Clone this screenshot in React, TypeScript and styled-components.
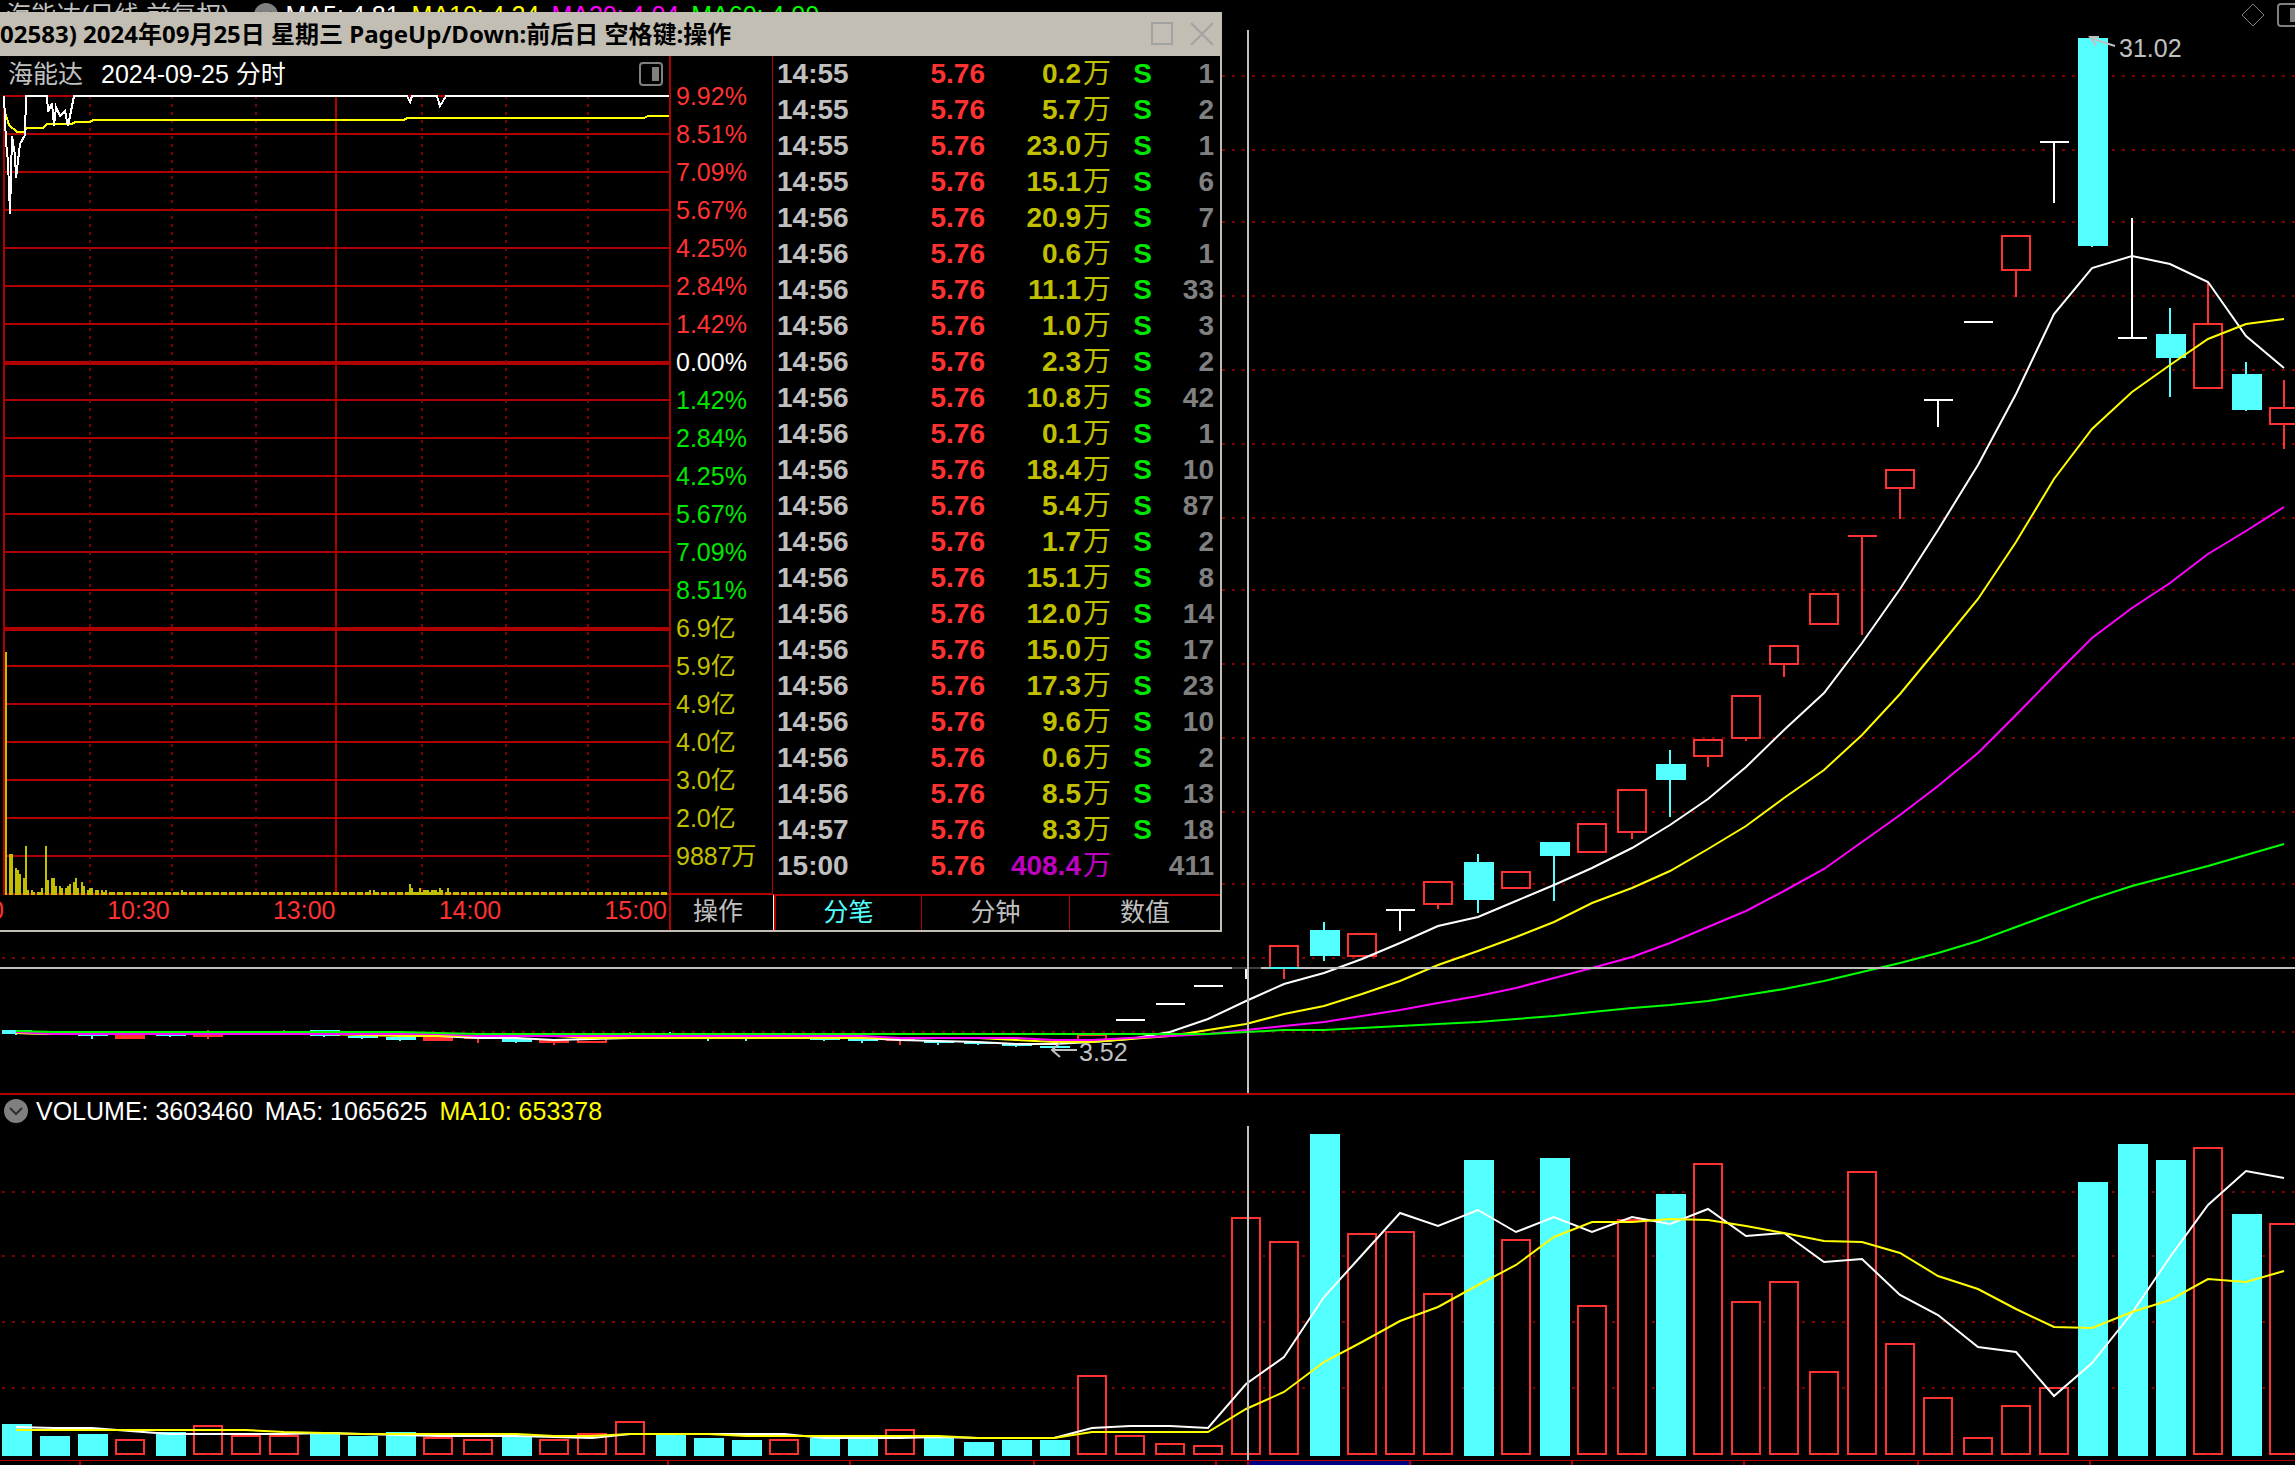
import React from 'react';
import styled, { createGlobalStyle } from 'styled-components';

const GlobalStyle = createGlobalStyle`
  * { box-sizing: border-box; }
  body {
    margin: 0;
    background: #000;
    color: #fff;
    font-family: "Liberation Sans", "Noto Sans CJK SC", sans-serif;
    font-size: 25px;
    line-height: 28px;
    overflow: hidden;
  }
  button {
    margin: 0;
    padding: 0;
    border: 0;
    background: none;
    color: inherit;
    font: inherit;
    cursor: pointer;
  }
`;

const color = {
  grid: '#b00000',
  dots: '#800000',
  up: '#ff3232',
  down: '#54ffff',
  white: '#ffffff',
  yellow: '#ffff00',
  magenta: '#ff00ff',
  green: '#00ff00',
  silver: '#c0c0c0',
  gray: '#808080',
  olive: '#c0c000',
  frame: '#c2beb3',
};

const Page = styled.main`
  position: relative;
  display: flex;
  flex-direction: column;
  min-height: 100vh;
  overflow: hidden;
`;

const Pane = styled.section<{ $ruled?: boolean }>`
  display: flex;
  flex-direction: column;
  border-top: ${(p) => (p.$ruled ? `2px solid ${color.grid}` : '0')};
`;

const PaneHeader = styled.header<{ $height: number }>`
  display: flex;
  align-items: center;
  gap: 8px;
  height: ${(p) => p.$height}px;
  padding-left: 4px;
  white-space: nowrap;
`;

const LegendGroup = styled.div`
  display: flex;
  gap: 12px;
`;

const Legend = styled.span<{ $color: string }>`
  color: ${(p) => p.$color};
`;

const StockName = styled.span`
  padding: 0 16px 0 2px;
  color: ${color.silver};
`;

const Spacer = styled.span`
  flex: 1;
`;

const IconButton = styled.button`
  display: flex;
  flex: none;
  color: ${color.gray};
`;

const ClippedTools = styled.div`
  display: flex;
  align-items: center;
  gap: 12px;
  width: 54px;
  overflow: hidden;
`;

const ChartSvg = styled.svg`
  display: block;
  width: 100%;
  height: auto;
  font-size: 25px;
`;

/* ---------- floating intraday window ---------- */

const FloatingWindow = styled.section`
  position: absolute;
  top: 12px;
  left: 0;
  width: 1222px;
  background: #000;
  border: solid ${color.frame};
  border-width: 0 2px 2px 0;
`;

const TitleBar = styled.header`
  display: flex;
  align-items: center;
  justify-content: space-between;
  height: 44px;
  padding-right: 8px;
  margin-right: -2px;
  background: ${color.frame};
`;

const Title = styled.h1`
  margin: 0;
  color: #000;
  font: bold 24px/44px "Noto Sans", "Noto Sans CJK SC", sans-serif;
  white-space: nowrap;
`;

const WindowButtons = styled.div`
  display: flex;
  gap: 16px;
  button { color: #a2a2a2; }
`;

const WindowBody = styled.div`
  display: grid;
  grid-template-columns: 671px 102px 1fr;
  height: 874px;
`;

const IntradayColumn = styled.div`
  display: flex;
  flex-direction: column;
  border-right: 2px solid ${color.grid};
`;

const IntradayHeader = styled.header`
  display: flex;
  align-items: center;
  gap: 18px;
  height: 36px;
  padding: 0 6px 0 8px;
`;

const TimeAxis = styled.div`
  display: grid;
  grid-template-columns: 4px repeat(4, 1fr);
  flex: 1;
  align-items: start;
  padding-right: 2px;
  color: ${color.up};
  overflow: hidden;
  span {
    display: flex;
    justify-content: flex-end;
  }
`;

const ScaleColumn = styled.div`
  display: flex;
  flex-direction: column;
`;

const ScaleList = styled.ul`
  flex: 1;
  margin: 0;
  padding: 21px 0 0 5px;
  list-style: none;
  border-right: 1px solid ${color.grid};
`;

const ScaleItem = styled.li<{ $color: string }>`
  height: 38px;
  line-height: 38px;
  color: ${(p) => p.$color};
  white-space: nowrap;
`;

const ActionButton = styled.button`
  height: 37px;
  padding: 0 8px 4px 0;
  border-top: 2px solid ${color.grid};
  color: ${color.silver};
`;

const TickColumn = styled.div`
  display: flex;
  flex-direction: column;
  justify-content: space-between;
`;

const TickTable = styled.table`
  width: 100%;
  border-collapse: collapse;
  table-layout: fixed;
  font-size: 28px;
  font-weight: bold;
  td {
    height: 36px;
    padding: 0;
    line-height: 36px;
    white-space: nowrap;
  }
`;

const Cell = styled.td<{ $color: string; $align?: string }>`
  color: ${(p) => p.$color};
  text-align: ${(p) => p.$align ?? 'right'};
`;

const TimeCell = styled(Cell)`
  && { padding-left: 4px; }
`;

const CountCell = styled(Cell)`
  && { padding-right: 6px; }
`;

const Unit = styled.span`
  padding-left: 2px;
  font-weight: normal;
`;

const Tabs = styled.nav`
  display: grid;
  grid-template-columns: 147px 148px 1fr;
  height: 36px;
  border-top: 2px solid ${color.grid};
  border-left: 1px solid ${color.white};
`;

const Tab = styled.button<{ $active?: boolean }>`
  padding-bottom: 2px;
  color: ${(p) => (p.$active ? color.down : color.silver)};
  border-left: ${(p) => (p.$active ? 2 : 1)}px solid ${color.grid};
`;

/* ---------- data ---------- */

const lefts = [
  2, 40, 78, 116, 156, 194, 232, 270, 310, 348, 386, 424, 464, 502, 540, 578, 616, 656, 694, 732,
  770, 810, 848, 886, 924, 964, 1002, 1040, 1078, 1116, 1156, 1194, 1232, 1270, 1310, 1348, 1386,
  1424, 1464, 1502, 1540, 1578, 1618, 1656, 1694, 1732, 1770, 1810, 1848, 1886, 1924, 1964, 2002,
  2040, 2078, 2118, 2156, 2194, 2232, 2270,
];

type Kind = 'S' | 'H' | 'W' | 'R';
// [slot, kind, body top, body bottom, wick top, wick bottom]
const candles: [number, Kind, number, number, number, number][] = [
  [0, 'S', 1030, 1034, 1030, 1035], [2, 'S', 1034, 1036, 1034, 1039], [3, 'H', 1036, 1038, 1036, 1038],
  [4, 'S', 1034, 1036, 1034, 1037], [5, 'H', 1034, 1036, 1030, 1039], [7, 'H', 1033, 1034, 1030, 1034],
  [8, 'S', 1030, 1036, 1030, 1037], [9, 'S', 1036, 1038, 1036, 1039], [10, 'S', 1037, 1040, 1037, 1041],
  [11, 'H', 1038, 1040, 1038, 1040], [12, 'R', 1038, 1038, 1038, 1043], [13, 'S', 1038, 1042, 1038, 1043],
  [14, 'H', 1040, 1042, 1040, 1045], [15, 'H', 1038, 1042, 1038, 1042], [16, 'R', 1036, 1036, 1032, 1036],
  [17, 'S', 1034, 1036, 1032, 1036], [18, 'S', 1036, 1038, 1036, 1041], [19, 'S', 1036, 1038, 1036, 1041],
  [21, 'S', 1038, 1040, 1038, 1041], [22, 'S', 1038, 1041, 1038, 1043], [23, 'R', 1040, 1040, 1040, 1045],
  [24, 'S', 1041, 1043, 1041, 1045], [25, 'S', 1042, 1044, 1042, 1045], [26, 'S', 1044, 1046, 1044, 1047],
  [27, 'S', 1046, 1048, 1046, 1048], [28, 'H', 1035, 1040, 1035, 1040],
  [29, 'W', 1020, 1020, 1020, 1020], [30, 'W', 1004, 1004, 1004, 1004], [31, 'W', 986, 986, 986, 986],
  [32, 'W', 968, 968, 968, 979], [33, 'H', 946, 968, 946, 979], [34, 'S', 930, 956, 922, 961],
  [35, 'H', 934, 956, 934, 956], [36, 'W', 910, 910, 910, 931], [37, 'H', 882, 904, 882, 909],
  [38, 'S', 862, 900, 854, 913], [39, 'H', 872, 888, 872, 888], [40, 'S', 842, 856, 842, 901],
  [41, 'H', 824, 852, 824, 852], [42, 'H', 790, 832, 790, 839], [43, 'S', 764, 780, 750, 817],
  [44, 'H', 740, 756, 740, 767], [45, 'H', 696, 738, 696, 741], [46, 'H', 646, 664, 646, 677],
  [47, 'H', 594, 624, 594, 624], [48, 'R', 536, 536, 536, 635], [49, 'H', 470, 488, 470, 519],
  [50, 'W', 400, 400, 400, 427], [51, 'W', 322, 322, 322, 322], [52, 'H', 236, 270, 236, 297],
  [53, 'W', 142, 142, 142, 203], [54, 'S', 38, 246, 38, 247], [55, 'W', 338, 338, 218, 338],
  [56, 'S', 334, 358, 308, 397], [57, 'H', 324, 388, 283, 388], [58, 'S', 374, 410, 362, 411],
  [59, 'H', 408, 424, 380, 449],
];

const priceMa = {
  white: [
    1033, 1034, 1034, 1034, 1034, 1034, 1034, 1034, 1034, 1034, 1034, 1036, 1038, 1038, 1040, 1039,
    1038, 1038, 1038, 1038, 1038, 1038, 1038, 1040, 1041, 1042, 1044, 1044, 1042, 1039, 1032, 1019,
    1001, 984, 973, 959, 943, 926, 917, 901, 885, 868, 848, 825, 799, 767, 730, 693, 643, 589, 530,
    465, 394, 314, 268, 256, 264, 282, 336, 368,
  ],
  yellow: [
    1033, 1034, 1034, 1034, 1034, 1034, 1034, 1034, 1034, 1035, 1036, 1036, 1036, 1036, 1036, 1038,
    1038, 1038, 1038, 1038, 1038, 1038, 1038, 1038, 1038, 1038, 1040, 1042, 1042, 1039, 1036, 1030,
    1024, 1014, 1006, 994, 981, 965, 951, 937, 922, 903, 888, 871, 849, 826, 798, 770, 735, 694, 648,
    599, 542, 479, 429, 392, 365, 339, 324, 319,
  ],
  magenta: [
    1032, 1034, 1034, 1034, 1034, 1034, 1034, 1034, 1034, 1034, 1034, 1034, 1036, 1036, 1036, 1036,
    1036, 1036, 1036, 1036, 1036, 1036, 1036, 1038, 1038, 1038, 1038, 1040, 1040, 1038, 1036, 1034,
    1030, 1026, 1022, 1016, 1010, 1003, 996, 988, 978, 968, 957, 943, 927, 911, 891, 869, 842, 815,
    786, 753, 715, 676, 638, 608, 583, 554, 531, 507,
  ],
  green: [
    1031, 1032, 1032, 1032, 1032, 1032, 1032, 1032, 1032, 1032, 1032, 1033, 1034, 1034, 1034, 1034,
    1034, 1034, 1034, 1034, 1034, 1034, 1034, 1034, 1034, 1034, 1034, 1034, 1034, 1034, 1034, 1034,
    1032, 1030, 1030, 1028, 1026, 1024, 1022, 1019, 1016, 1012, 1008, 1005, 1001, 995, 989, 981, 972,
    963, 953, 941, 927, 913, 899, 886, 876, 866, 855, 844,
  ],
};

const volumes: [Kind, number][] = [
  ['S', 1424], ['S', 1436], ['S', 1434], ['H', 1440], ['S', 1432], ['H', 1426], ['H', 1436],
  ['H', 1436], ['S', 1432], ['S', 1436], ['S', 1432], ['H', 1438], ['H', 1440], ['S', 1436],
  ['H', 1440], ['H', 1434], ['H', 1422], ['S', 1434], ['S', 1438], ['S', 1440], ['H', 1440],
  ['S', 1438], ['S', 1438], ['H', 1430], ['S', 1438], ['S', 1442], ['S', 1440], ['S', 1440],
  ['H', 1376], ['H', 1436], ['H', 1444], ['H', 1446], ['H', 1218], ['H', 1242], ['S', 1134],
  ['H', 1234], ['H', 1232], ['H', 1294], ['S', 1160], ['H', 1240], ['S', 1158], ['H', 1306],
  ['H', 1220], ['S', 1194], ['H', 1164], ['H', 1302], ['H', 1282], ['H', 1372], ['H', 1172],
  ['H', 1344], ['H', 1398], ['H', 1438], ['H', 1406], ['H', 1388], ['S', 1182], ['S', 1144],
  ['S', 1160], ['H', 1148], ['S', 1214], ['H', 1224],
];

const volumeMa = {
  white: [
    1427, 1428, 1428, 1431, 1434, 1434, 1434, 1434, 1433, 1434, 1435, 1436, 1436, 1436, 1437, 1438,
    1434, 1434, 1434, 1434, 1434, 1438, 1438, 1438, 1437, 1438, 1438, 1438, 1428, 1426, 1426, 1428,
    1384, 1357, 1297, 1255, 1213, 1226, 1210, 1232, 1217, 1232, 1217, 1224, 1209, 1236, 1233, 1262,
    1259, 1295, 1315, 1347, 1352, 1396, 1363, 1313, 1257, 1205, 1171, 1178,
  ],
  yellow: [
    1430, 1430, 1430, 1430, 1430, 1430, 1430, 1432, 1433, 1434, 1434, 1434, 1434, 1434, 1436, 1436,
    1434, 1434, 1434, 1436, 1436, 1436, 1436, 1436, 1436, 1438, 1438, 1438, 1432, 1432, 1432, 1432,
    1409, 1392, 1362, 1342, 1321, 1307, 1285, 1265, 1237, 1222, 1222, 1219, 1220, 1226, 1233, 1241,
    1242, 1253, 1276, 1289, 1309, 1327, 1328, 1312, 1300, 1279, 1282, 1271,
  ],
};

const priceGrid = [76, 150, 222, 296, 370, 444, 518, 590, 664, 738, 812, 884, 958, 1032];
const volumeGrid = [1192, 1256, 1322, 1388];
const axisTicks = [80, 668, 850, 1034, 1216, 1248, 1410, 1572, 1744, 1918, 2090];

const scale: [string, string][] = [
  ...['9.92%', '8.51%', '7.09%', '5.67%', '4.25%', '2.84%', '1.42%'].map((t): [string, string] => [t, color.up]),
  ['0.00%', color.white],
  ...['1.42%', '2.84%', '4.25%', '5.67%', '7.09%', '8.51%'].map((t): [string, string] => [t, '#00e600']),
  ...['6.9亿', '5.9亿', '4.9亿', '4.0亿', '3.0亿', '2.0亿', '9887万'].map((t): [string, string] => [t, color.olive]),
];

const trades: [string, string, number][] = [
  ['14:55', '0.2', 1], ['14:55', '5.7', 2], ['14:55', '23.0', 1], ['14:55', '15.1', 6],
  ['14:56', '20.9', 7], ['14:56', '0.6', 1], ['14:56', '11.1', 33], ['14:56', '1.0', 3],
  ['14:56', '2.3', 2], ['14:56', '10.8', 42], ['14:56', '0.1', 1], ['14:56', '18.4', 10],
  ['14:56', '5.4', 87], ['14:56', '1.7', 2], ['14:56', '15.1', 8], ['14:56', '12.0', 14],
  ['14:56', '15.0', 17], ['14:56', '17.3', 23], ['14:56', '9.6', 10], ['14:56', '0.6', 2],
  ['14:56', '8.5', 13], ['14:57', '8.3', 18], ['15:00', '408.4', 411],
];

const intradayRows = [96, 134, 172, 210, 248, 286, 324, 400, 438, 476, 514, 552, 590, 666, 704, 742, 780, 818, 856, 894];
const intradayDots = [90, 172, 256, 422, 506, 588];
// [x, width, top]
const minuteBars: [number, number, number][] = [
  [5, 2, 652], [9, 4, 854], [15, 2, 868], [17, 2, 870], [19, 2, 874], [23, 2, 878], [25, 2, 846],
  [27, 2, 890], [31, 2, 890], [33, 2, 892], [37, 4, 892], [41, 2, 888], [45, 2, 846], [47, 2, 880],
  [51, 4, 878], [55, 2, 886], [59, 2, 886], [61, 2, 888], [65, 2, 888], [67, 2, 886], [69, 2, 884],
  [73, 2, 882], [75, 2, 878], [77, 2, 888], [81, 2, 882], [83, 2, 886], [87, 2, 890], [89, 4, 888],
  [95, 4, 890], [101, 2, 890], [103, 2, 892], [105, 2, 890], [181, 2, 890], [369, 2, 890],
  [373, 2, 890], [409, 2, 884], [411, 2, 888], [419, 2, 888], [423, 6, 890], [431, 6, 890],
  [439, 2, 888], [441, 2, 890], [447, 2, 888],
];

/* ---------- drawings ---------- */

const slotPoints = (ys: number[]) => ys.map((y, i) => `${lefts[i] + 14},${y}`).join(' ');

const MaLine = ({ ys, stroke }: { ys: number[]; stroke: string }) => (
  <polyline
    points={slotPoints(ys)}
    fill="none"
    stroke={stroke}
    strokeWidth="2"
    shapeRendering="geometricPrecision"
  />
);

const DottedRow = ({ y }: { y: number }) => (
  <line x1="2" x2="2295" y1={y} y2={y} stroke={color.dots} strokeWidth="2" strokeDasharray="3 7" />
);

const Candle = ({ slot, kind, top, bottom, high, low }: {
  slot: number; kind: Kind; top: number; bottom: number; high: number; low: number;
}) => {
  const x = lefts[slot];
  const cx = x + 14;
  if (kind === 'S') {
    return (
      <g fill={color.down}>
        <rect x={x} y={top} width="30" height={bottom - top} />
        <rect x={cx - 1} y={high} width="2" height={low - high} />
      </g>
    );
  }
  if (kind === 'H') {
    return (
      <g stroke={color.up} strokeWidth="2">
        <rect x={x} y={top} width="28" height={bottom - top} fill="#000" />
        {high < top && <line x1={cx} x2={cx} y1={high} y2={top} />}
        {low > bottom && <line x1={cx} x2={cx} y1={bottom} y2={low} />}
      </g>
    );
  }
  return (
    <g stroke={kind === 'W' ? color.white : color.up} strokeWidth="2">
      <line x1={x} x2={x + 29} y1={top} y2={top} />
      {low > high && <line x1={cx} x2={cx} y1={high} y2={low} />}
    </g>
  );
};

const PanelIcon = () => (
  <svg width="24" height="24" viewBox="0 0 24 24" fill="none" aria-hidden="true">
    <rect x="1" y="1" width="22" height="22" rx="3" stroke="currentColor" strokeWidth="2" />
    <rect x="13" y="5" width="7" height="14" fill="currentColor" />
  </svg>
);

const CollapseIcon = () => (
  <svg width="24" height="24" viewBox="0 0 24 24" fill="none" aria-hidden="true">
    <circle cx="12" cy="12" r="12" fill="#808080" />
    <path d="M6 9l6 6 6-6" stroke="#303030" strokeWidth="2" />
  </svg>
);

const PriceChart = () => (
  <ChartSvg viewBox="0 30 2295 1063" shapeRendering="crispEdges" role="img" aria-label="日线">
    {priceGrid.map((y) => <DottedRow key={y} y={y} />)}
    {candles.map(([slot, kind, top, bottom, high, low]) => (
      <Candle key={slot} slot={slot} kind={kind} top={top} bottom={bottom} high={high} low={low} />
    ))}
    <MaLine ys={priceMa.white} stroke={color.white} />
    <MaLine ys={priceMa.yellow} stroke={color.yellow} />
    <MaLine ys={priceMa.magenta} stroke={color.magenta} />
    <MaLine ys={priceMa.green} stroke={color.green} />
    <g stroke={color.silver} strokeWidth="2" fill="none">
      <path d="M2115 46L2090 38M2099 37h-9l6 9" shapeRendering="geometricPrecision" />
      <path d="M1077 1050h-25M1060 1043l-8 7 8 7" shapeRendering="geometricPrecision" />
      <line x1="1248" x2="1248" y1="30" y2="1094" />
      <line x1="0" x2="2295" y1="968" y2="968" />
      <line x1="1232" x2="1247" y1="968" y2="968" stroke="#3f3f3f" />
      <line x1="1249" x2="1261" y1="968" y2="968" stroke="#3f3f3f" />
      <line x1="1269" x2="1299" y1="968" y2="968" stroke="#3ff2f2" />
    </g>
    <g fill={color.silver}>
      <text x="2119" y="57">31.02</text>
      <text x="1079" y="1061">3.52</text>
    </g>
  </ChartSvg>
);

const VolumeChart = () => (
  <ChartSvg viewBox="0 1126 2295 339" shapeRendering="crispEdges" role="img" aria-label="VOLUME">
    {volumeGrid.map((y) => <DottedRow key={y} y={y} />)}
    {volumes.map(([kind, top], i) =>
      kind === 'S' ? (
        <rect key={i} x={lefts[i]} y={top} width="30" height={1456 - top} fill={color.down} />
      ) : (
        <g key={i}>
          <rect x={lefts[i] - 3} y={top - 1} width="34" height={1456 - top} fill="#000" />
          <rect x={lefts[i]} y={top} width="28" height={1454 - top} fill="#000" stroke={color.up} strokeWidth="2" />
        </g>
      ),
    )}
    <MaLine ys={volumeMa.white} stroke={color.white} />
    <MaLine ys={volumeMa.yellow} stroke={color.yellow} />
    <rect x="1248" y="1461" width="164" height="4" fill="#000080" />
    <rect x="0" y="1460" width="2295" height="1" fill={color.grid} />
    {axisTicks.map((x) => <rect key={x} x={x - 1} y="1461" width="2" height="4" fill={color.grid} />)}
    <rect x="1247" y="1126" width="2" height="334" fill={color.silver} />
  </ChartSvg>
);

const IntradayChart = () => (
  <ChartSvg viewBox="0 92 669 804" shapeRendering="crispEdges" role="img" aria-label="分时">
    <g stroke={color.grid} strokeWidth="2">
      {intradayRows.map((y) => <line key={y} x1="3" x2="669" y1={y} y2={y} />)}
      <line x1="3" x2="669" y1="363" y2="363" strokeWidth="4" />
      <line x1="3" x2="669" y1="629" y2="629" strokeWidth="4" />
      <line x1="4" x2="4" y1="96" y2="894" />
      <line x1="336" x2="336" y1="96" y2="894" />
    </g>
    <g stroke={color.dots} strokeWidth="2" strokeDasharray="3 5">
      {intradayDots.map((x) => <line key={x} x1={x} x2={x} y1="96" y2="894" />)}
    </g>
    <g fill={color.olive}>
      {minuteBars.map(([x, w, top]) => <rect key={x} x={x} y={top} width={w} height={895 - top} />)}
    </g>
    <line x1="109" x2="669" y1="893.5" y2="893.5" stroke={color.olive} strokeWidth="3" strokeDasharray="6 2" />
    <g fill="none" strokeWidth="2">
      <polyline
        stroke={color.yellow}
        points="5,112 9,125 17,132 24,132 27,128 43,128 47,124 72,124 75,122 90,122 93,120 404,120 407,118 644,118 648,116 669,116"
      />
      <polyline
        stroke={color.white}
        points="4,96 6,142 8,162 10,214 12,136 15,155 16,178 20,144 25,135 26,96 47,96 48,112 52,103 54,126 56,107 60,116 65,111 68,126 74,96 407,96 410,102 412,96 437,96 440,106 446,96 669,96"
      />
    </g>
  </ChartSvg>
);

const IntradayWindow = () => (
  <FloatingWindow>
    <TitleBar>
      <Title>02583) 2024年09月25日 星期三 PageUp/Down:前后日 空格键:操作</Title>
      <WindowButtons>
        <IconButton aria-label="最大化">
          <svg width="24" height="24" viewBox="0 0 24 24" fill="none" stroke="currentColor" strokeWidth="2">
            <rect x="2" y="1" width="20" height="21" />
          </svg>
        </IconButton>
        <IconButton aria-label="关闭">
          <svg width="24" height="24" viewBox="0 0 24 24" fill="none" stroke="currentColor" strokeWidth="2">
            <path d="M1 1l22 22M23 1L1 23" />
          </svg>
        </IconButton>
      </WindowButtons>
    </TitleBar>
    <WindowBody>
      <IntradayColumn>
        <IntradayHeader>
          <Legend $color={color.silver}>海能达</Legend>
          <Legend $color={color.white}>2024-09-25 分时</Legend>
          <Spacer />
          <IconButton aria-label="侧栏"><PanelIcon /></IconButton>
        </IntradayHeader>
        <IntradayChart />
        <TimeAxis>
          {['09:30', '10:30', '13:00', '14:00', '15:00'].map((t) => <span key={t}>{t}</span>)}
        </TimeAxis>
      </IntradayColumn>
      <ScaleColumn>
        <ScaleList>
          {scale.map(([text, c], i) => <ScaleItem key={i} $color={c}>{text}</ScaleItem>)}
        </ScaleList>
        <ActionButton>操作</ActionButton>
      </ScaleColumn>
      <TickColumn>
        <TickTable>
          <colgroup>
            <col width="95" />
            <col width="117" />
            <col width="126" />
            <col width="41" />
            <col />
          </colgroup>
          <tbody>
            {trades.map(([time, amount, count], i) => {
              const closing = time === '15:00';
              return (
                <tr key={i}>
                  <TimeCell $color={color.silver} $align="left">{time}</TimeCell>
                  <Cell $color={color.up}>5.76</Cell>
                  <Cell $color={closing ? '#c000c0' : color.olive}>{amount}<Unit>万</Unit></Cell>
                  <Cell $color="#00e600">{closing ? '' : 'S'}</Cell>
                  <CountCell $color={color.gray}>{count}</CountCell>
                </tr>
              );
            })}
          </tbody>
        </TickTable>
        <Tabs>
          <Tab $active>分笔</Tab>
          <Tab>分钟</Tab>
          <Tab>数值</Tab>
        </Tabs>
      </TickColumn>
    </WindowBody>
  </FloatingWindow>
);

export default function App() {
  return (
    <Page>
      <GlobalStyle />
      <Pane>
        <PaneHeader $height={30}>
          <StockName>海能达(日线.前复权)</StockName>
          <IconButton aria-label="收起"><CollapseIcon /></IconButton>
          <LegendGroup>
            <Legend $color={color.white}>MA5: 4.81</Legend>
            <Legend $color={color.yellow}>MA10: 4.24</Legend>
            <Legend $color={color.magenta}>MA20: 4.04</Legend>
            <Legend $color={color.green}>MA60: 4.00</Legend>
          </LegendGroup>
          <Spacer />
          <ClippedTools>
            <IconButton aria-label="标记">
              <svg width="24" height="24" viewBox="0 0 24 24" fill="none" stroke="currentColor" strokeWidth="1">
                <path d="M12 1L23 12L12 23L1 12Z" />
              </svg>
            </IconButton>
            <IconButton aria-label="侧栏"><PanelIcon /></IconButton>
          </ClippedTools>
        </PaneHeader>
        <PriceChart />
      </Pane>
      <Pane $ruled>
        <PaneHeader $height={31}>
          <IconButton aria-label="收起"><CollapseIcon /></IconButton>
          <LegendGroup>
            <Legend $color={color.white}>VOLUME: 3603460</Legend>
            <Legend $color={color.white}>MA5: 1065625</Legend>
            <Legend $color={color.yellow}>MA10: 653378</Legend>
          </LegendGroup>
        </PaneHeader>
        <VolumeChart />
      </Pane>
      <IntradayWindow />
    </Page>
  );
}
